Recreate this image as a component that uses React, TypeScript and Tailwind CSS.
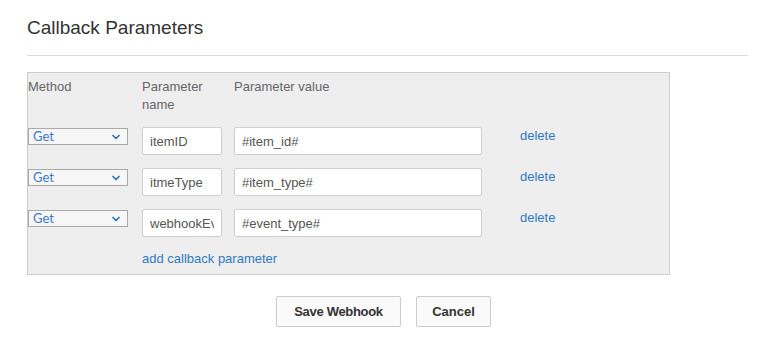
import { ChevronDown } from "lucide-react";

type Param = { method: string; name: string; value: string };

const PARAMS: Param[] = [
  { method: "Get", name: "itemID", value: "#item_id#" },
  { method: "Get", name: "itmeType", value: "#item_type#" },
  { method: "Get", name: "webhookEventType", value: "#event_type#" },
];

function MethodSelect({ value }: { value: string }) {
  return (
    <div className="mt-px flex h-[17px] w-[100px] items-center justify-between border border-[#a9a9a9] bg-[#f6f6f6] pl-[4px] pr-[5px]">
      <span className="-mt-px font-['Lato',sans-serif] text-[13px] leading-none text-[#3a7bc8]">{value}</span>
      <ChevronDown className="h-[12px] w-[12px] text-[#2f6fb8]" strokeWidth={3.4} />
    </div>
  );
}

function TextBox({ value, width }: { value: string; width: string }) {
  return (
    <input
      readOnly
      value={value}
      className={`${width} h-[28px] rounded-[2px] border border-[#cfcfcf] bg-white px-[7px] text-[13px] text-[#555] outline-none`}
    />
  );
}

export default function App() {
  return (
    <div className="min-h-[348px] w-[760px] bg-white px-[27px] font-['Liberation_Sans',Arial,sans-serif]">
      <h2 className="pt-[17px] text-[19px] leading-[21px] text-[#333]">Callback Parameters</h2>
      <div className="mt-[17px] h-px w-[721px] bg-[#dcdcdc]" />

      <div className="mt-[16px] w-[643px] border border-[#cccccc] bg-[#eeeeee] pb-[6px] pt-[5px] text-[13px] leading-[18px]">
        <div className="flex text-[#666]">
          <div className="w-[114px]">Method</div>
          <div className="w-[92px]">
            Parameter
            <br />
            name
          </div>
          <div>Parameter value</div>
        </div>

        <div className="mt-[13px] flex flex-col gap-[13px]">
          {PARAMS.map((p) => (
            <div key={p.name} className="flex items-start">
              <div className="w-[114px]">
                <MethodSelect value={p.method} />
              </div>
              <div className="w-[92px]">
                <TextBox value={p.name} width="w-[80px]" />
              </div>
              <div className="w-[286px]">
                <TextBox value={p.value} width="w-[248px]" />
              </div>
              <a href="#" className="text-[#3079c5]">
                delete
              </a>
            </div>
          ))}
        </div>

        <div className="mt-[13px] pl-[114px]">
          <a href="#" className="text-[#3079c5]">
            add callback parameter
          </a>
        </div>
      </div>

      <div className="ml-[249px] mt-[21px] flex gap-[15px]">
        <button
          type="button"
          className="h-[31px] w-[125px] rounded-[2px] border border-[#cccccc] bg-[#fafafa] text-[13px] font-bold tracking-[-0.3px] text-[#333]"
        >
          Save Webhook
        </button>
        <button
          type="button"
          className="h-[31px] w-[75px] rounded-[2px] border border-[#cccccc] bg-[#fafafa] text-[13px] font-bold text-[#333]"
        >
          Cancel
        </button>
      </div>
    </div>
  );
}
